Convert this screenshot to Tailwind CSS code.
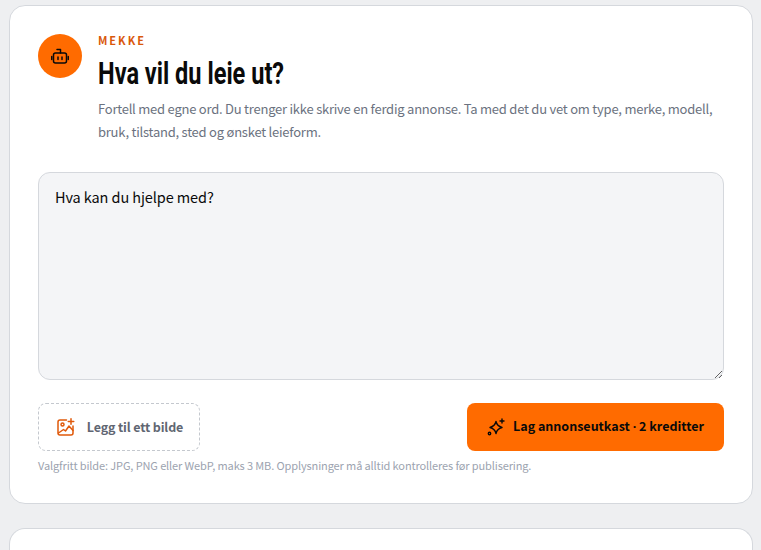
<!DOCTYPE html>
<html lang="no">
  <head>
    <meta charset="UTF-8" />
    <title>Mekke</title>
    <script src="https://cdn.jsdelivr.net/npm/@tailwindcss/browser@4"></script>
  </head>
  <body class="bg-[#eeeff1] h-[550px] overflow-hidden font-['Noto_Sans_CJK_SC','Open_Sans',sans-serif]">
    <div class="pl-[9px] pr-[8px] pt-[5px] flex flex-col gap-6">
      <section class="bg-white border border-[#d5d8dd] rounded-2xl h-[499px] pt-7 px-7">
        <div class="flex gap-4">
          <div class="w-11 h-11 rounded-full bg-[#ff6b00] flex items-center justify-center shrink-0 text-[#0a0a0a]">
            <svg xmlns="http://www.w3.org/2000/svg" width="18" height="18" viewBox="0 0 18 18" fill="none" stroke="currentColor" stroke-width="1.5" stroke-linecap="round" stroke-linejoin="round">
              <rect x="2.5" y="6" width="13" height="10" rx="2" />
              <path d="M6 2.5h3.500V6M.75 9.500v3M17.250 9.500v3M7 10v2.500M11 10v2.500" />
            </svg>
          </div>
          <div class="flex-1">
            <p class="-mt-[2px] text-[11px] leading-4 font-semibold tracking-[0.18em] text-[#d9580b]">MEKKE</p>
            <h1 class="mt-2 text-[31px] leading-[36px] font-bold text-[#0a0a0a] font-['Roboto',sans-serif] origin-left scale-x-[.76] whitespace-nowrap">Hva vil du leie ut?</h1>
            <p class="mt-[5px] text-[13px] tracking-[-0.23px] leading-[23px] text-[#6b7280]">Fortell med egne ord. Du trenger ikke skrive en ferdig annonse. Ta med det du vet om type, merke, modell, bruk, tilstand, sted og ønsket leieform.</p>
          </div>
        </div>
        <textarea class="block mt-[29px] w-full h-[208px] bg-[#f4f5f7] border border-[#d5d8dd] rounded-xl px-4 py-3 text-[14.5px] tracking-[-0.1px] leading-6 text-[#0a0a0a] placeholder:text-[#0a0a0a] outline-none" placeholder="Hva kan du hjelpe med?"></textarea>
        <div class="mt-[23px] flex items-center justify-between">
          <button type="button" class="w-[162px] h-12 pl-[2px] border border-dashed border-[#c4c8ce] rounded-lg flex items-center justify-center gap-3 text-[12.5px] tracking-[-0.15px] font-semibold text-[#5f6672]">
            <svg class="text-[#e0590a]" xmlns="http://www.w3.org/2000/svg" width="18" height="18" viewBox="0 0 18 18" fill="none" stroke="currentColor" stroke-width="1.5" stroke-linecap="round" stroke-linejoin="round">
              <path d="M9.500 2H3a2 2 0 0 0-2 2v11a2 2 0 0 0 2 2h11a2 2 0 0 0 2-2V8" />
              <circle cx="5.500" cy="6.500" r="1.500" />
              <path d="M1.500 15l5-3.500 2 1.500 3.500-5 4 4.500M14 .75v5.500M11.250 3.500h5.500" />
            </svg>
            Legg til ett bilde
          </button>
          <button type="button" class="w-[257px] h-12 bg-[#ff6b00] rounded-lg flex items-center justify-center gap-2 text-[12.5px] font-bold text-[#0a0a0a]">
            <svg xmlns="http://www.w3.org/2000/svg" width="18" height="18" viewBox="0 0 18 18" fill="none" stroke="currentColor" stroke-width="1.4" stroke-linecap="round" stroke-linejoin="round">
              <path d="M9 3.500c.7 3.300 2 4.800 6 6-4 1.100-5.300 2.500-6 6-.7-3.500-2-4.900-6-6 4-1.200 5.300-2.700 6-6z" />
              <path d="M15 1v4M13 3h4" />
              <circle cx="2.500" cy="15.500" r="1.200" />
            </svg>
            <span>Lag annonseutkast <span class="font-['Open_Sans',sans-serif]">·</span> 2 kreditter</span>
          </button>
        </div>
        <p class="mt-[6px] text-[11px] tracking-[-0.12px] leading-4 text-[#9ca3af]">Valgfritt bilde: JPG, PNG eller WebP, maks 3 MB. Opplysninger må alltid kontrolleres før publisering.</p>
      </section>
      <section class="bg-white border border-b-0 border-[#d5d8dd] rounded-t-2xl h-[22px]"></section>
    </div>
  </body>
</html>
